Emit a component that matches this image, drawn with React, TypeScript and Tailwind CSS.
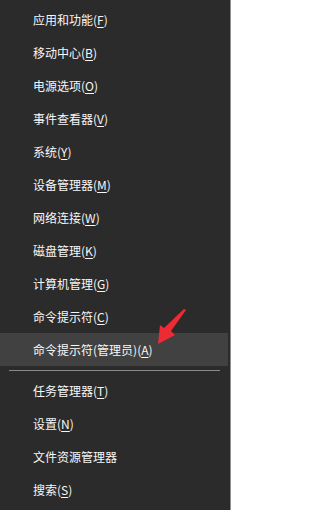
import React from "react";

type Item = { label: string; key?: string; active?: boolean };

const top: Item[] = [
  { label: "应用和功能", key: "F" },
  { label: "移动中心", key: "B" },
  { label: "电源选项", key: "O" },
  { label: "事件查看器", key: "V" },
  { label: "系统", key: "Y" },
  { label: "设备管理器", key: "M" },
  { label: "网络连接", key: "W" },
  { label: "磁盘管理", key: "K" },
  { label: "计算机管理", key: "G" },
  { label: "命令提示符", key: "C" },
  { label: "命令提示符(管理员)", key: "A", active: true },
];

const bottom: Item[] = [
  { label: "任务管理器", key: "T" },
  { label: "设置", key: "N" },
  { label: "文件资源管理器" },
  { label: "搜索", key: "S" },
];

function Row({ item }: { item: Item }) {
  return (
    <div
      className={
        "flex h-[33px] w-[228px] items-center pl-[33px] text-[12px] leading-none text-[#f7f7f7] " +
        (item.active ? "bg-[#414141]" : "")
      }
    >
      <span>
        {item.label}
        {item.key ? (
          <>
            (<span className="underline underline-offset-[2px] decoration-1">{item.key}</span>)
          </>
        ) : null}
      </span>
    </div>
  );
}

export default function App() {
  return (
    <div
      className="relative h-[510px] w-[231px] overflow-hidden border-r border-[#8f8f8f] bg-[#2b2b2b] pt-[3px]"
      style={{ fontFamily: '"Noto Sans CJK SC", "Noto Sans", sans-serif' }}
    >
      {top.map((it) => (
        <Row key={it.label} item={it} />
      ))}
      <div className="mx-[9px] mb-[3px] mt-[4px] h-px w-[211px] bg-[#8a8a8a]" />
      {bottom.map((it) => (
        <Row key={it.label} item={it} />
      ))}
      <svg
        className="absolute left-0 top-0"
        width="231"
        height="510"
        viewBox="0 0 231 510"
      >
        <polygon
          points="184,309 186,310 171,331 175,335 158,344 160,325 164,328"
          fill="#ee2b33"
        />
      </svg>
    </div>
  );
}
